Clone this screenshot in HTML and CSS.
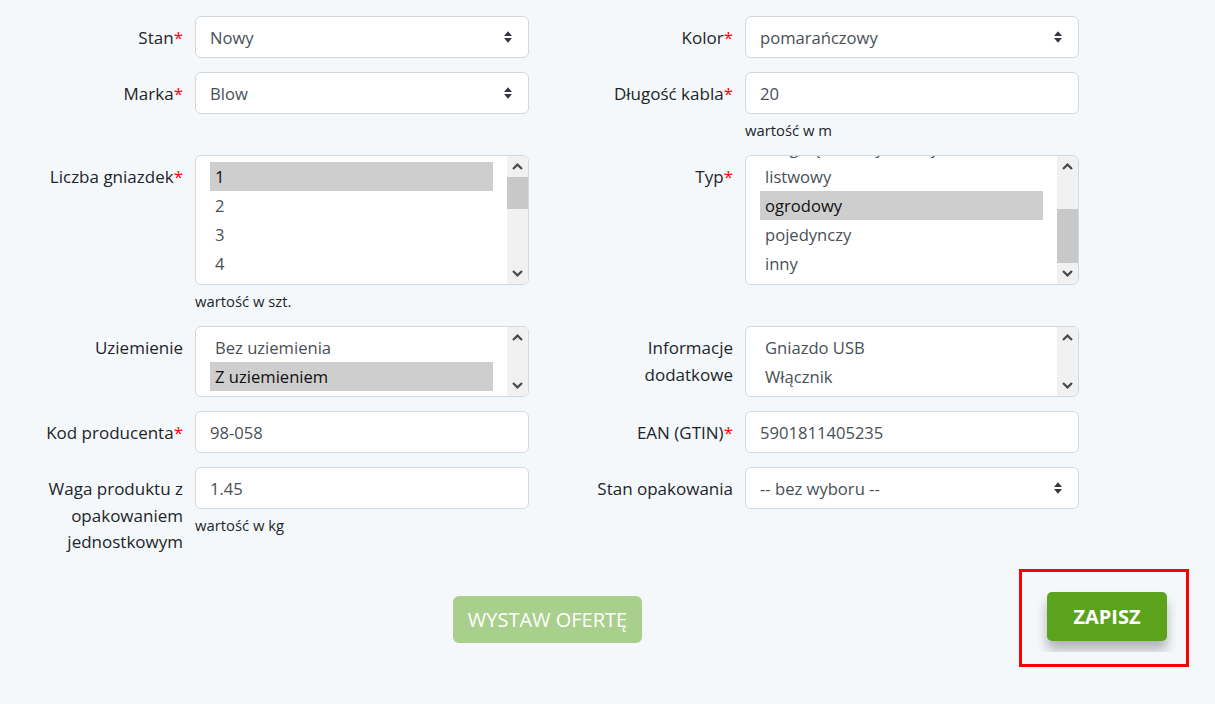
FILE: index.html
```html
<!DOCTYPE html>
<html lang="pl">
<head>
  <meta charset="UTF-8">
  <title>Parametry produktu</title>
  <link rel="stylesheet" href="styles.css">
</head>
<body>

  <div class="form">

    <div class="grid">

      <div class="field">
        <label class="field-label">Stan<span class="req">*</span></label>
        <div class="field-body">
          <select class="control select">
            <option>Nowy</option>
            <option>Używany</option>
          </select>
        </div>
      </div>

      <div class="field">
        <label class="field-label">Kolor<span class="req">*</span></label>
        <div class="field-body">
          <select class="control select">
            <option>pomarańczowy</option>
            <option>czarny</option>
            <option>biały</option>
          </select>
        </div>
      </div>

      <div class="field">
        <label class="field-label">Marka<span class="req">*</span></label>
        <div class="field-body">
          <select class="control select">
            <option>Blow</option>
          </select>
        </div>
      </div>

      <div class="field">
        <label class="field-label">Długość kabla<span class="req">*</span></label>
        <div class="field-body">
          <input class="control" type="text" value="20">
          <div class="hint">wartość w m</div>
        </div>
      </div>

      <div class="field">
        <label class="field-label">Liczba gniazdek<span class="req">*</span></label>
        <div class="field-body">
          <div class="listbox tall" role="listbox">
            <div class="listbox-items">
              <div class="option selected">1</div>
              <div class="option">2</div>
              <div class="option">3</div>
              <div class="option">4</div>
            </div>
            <div class="scrollbar">
              <span class="sb-btn"><svg width="11" height="7" viewBox="0 0 11 7"><path d="M1 6 L5.5 1.6 L10 6" fill="none" stroke="#4a4a4a" stroke-width="2.2"/></svg></span>
              <span class="sb-track"><span class="sb-thumb"></span></span>
              <span class="sb-btn"><svg width="11" height="7" viewBox="0 0 11 7"><path d="M1 1 L5.5 5.4 L10 1" fill="none" stroke="#4a4a4a" stroke-width="2.2"/></svg></span>
            </div>
          </div>
          <div class="hint">wartość w szt.</div>
        </div>
      </div>

      <div class="field">
        <label class="field-label">Typ<span class="req">*</span></label>
        <div class="field-body">
          <div class="listbox tall" role="listbox">
            <div class="listbox-items" data-scroll="end">
              <div class="option">rozgałęźnik wtyczkowy</div>
              <div class="option">listwowy</div>
              <div class="option selected">ogrodowy</div>
              <div class="option">pojedynczy</div>
              <div class="option">inny</div>
            </div>
            <div class="scrollbar">
              <span class="sb-btn"><svg width="11" height="7" viewBox="0 0 11 7"><path d="M1 6 L5.5 1.6 L10 6" fill="none" stroke="#4a4a4a" stroke-width="2.2"/></svg></span>
              <span class="sb-track"><span class="sb-thumb at-end"></span></span>
              <span class="sb-btn"><svg width="11" height="7" viewBox="0 0 11 7"><path d="M1 1 L5.5 5.4 L10 1" fill="none" stroke="#4a4a4a" stroke-width="2.2"/></svg></span>
            </div>
          </div>
        </div>
      </div>

      <div class="field">
        <label class="field-label">Uziemienie</label>
        <div class="field-body">
          <div class="listbox short" role="listbox">
            <div class="listbox-items">
              <div class="option">Bez uziemienia</div>
              <div class="option selected">Z uziemieniem</div>
            </div>
            <div class="scrollbar">
              <span class="sb-btn"><svg width="11" height="7" viewBox="0 0 11 7"><path d="M1 6 L5.5 1.6 L10 6" fill="none" stroke="#4a4a4a" stroke-width="2.2"/></svg></span>
              <span class="sb-track"></span>
              <span class="sb-btn"><svg width="11" height="7" viewBox="0 0 11 7"><path d="M1 1 L5.5 5.4 L10 1" fill="none" stroke="#4a4a4a" stroke-width="2.2"/></svg></span>
            </div>
          </div>
        </div>
      </div>

      <div class="field">
        <label class="field-label">Informacje dodatkowe</label>
        <div class="field-body">
          <div class="listbox short" role="listbox">
            <div class="listbox-items">
              <div class="option">Gniazdo USB</div>
              <div class="option">Włącznik</div>
            </div>
            <div class="scrollbar">
              <span class="sb-btn"><svg width="11" height="7" viewBox="0 0 11 7"><path d="M1 6 L5.5 1.6 L10 6" fill="none" stroke="#4a4a4a" stroke-width="2.2"/></svg></span>
              <span class="sb-track"></span>
              <span class="sb-btn"><svg width="11" height="7" viewBox="0 0 11 7"><path d="M1 1 L5.5 5.4 L10 1" fill="none" stroke="#4a4a4a" stroke-width="2.2"/></svg></span>
            </div>
          </div>
        </div>
      </div>

      <div class="field">
        <label class="field-label">Kod producenta<span class="req">*</span></label>
        <div class="field-body">
          <input class="control" type="text" value="98-058">
        </div>
      </div>

      <div class="field">
        <label class="field-label">EAN (GTIN)<span class="req">*</span></label>
        <div class="field-body">
          <input class="control" type="text" value="5901811405235">
        </div>
      </div>

      <div class="field">
        <label class="field-label">Waga produktu z opakowaniem jednostkowym</label>
        <div class="field-body">
          <input class="control" type="text" value="1.45">
          <div class="hint">wartość w kg</div>
        </div>
      </div>

      <div class="field">
        <label class="field-label">Stan opakowania</label>
        <div class="field-body">
          <select class="control select">
            <option>-- bez wyboru --</option>
          </select>
        </div>
      </div>

    </div>

    <div class="actions">
      <button class="btn btn-offer">WYSTAW OFERTĘ</button>
      <div class="save-frame">
        <div class="save-clip">
          <button class="btn btn-save">ZAPISZ</button>
        </div>
      </div>
    </div>

  </div>

  <script>
    document.querySelectorAll('.listbox-items[data-scroll="end"]').forEach(el => {
      el.scrollTop = el.scrollHeight;
    });
  </script>

</body>
</html>
```

FILE: styles.css
```css
body {
  margin: 0;
  padding: 0;
  background: #f5f8fb;
  font-family: "Open Sans", "Noto Sans", sans-serif;
  color: #212529;
}

.form {
  width: 1215px;
  padding-top: 16px;
}

.grid {
  display: grid;
  grid-template-columns: 550px 550px;
  row-gap: 14px;
  align-items: start;
}

.field {
  display: grid;
  grid-template-columns: 183px 334px;
  column-gap: 12px;
  align-items: start;
}

.field-label {
  text-align: right;
  font-size: 17px;
  line-height: 26.5px;
  padding-top: 9px;
  padding-left: 26px;
}

.req {
  color: #f00;
}

.control {
  display: block;
  width: 100%;
  height: 42px;
  box-sizing: border-box;
  border: 1px solid #d3d8de;
  border-radius: 6px;
  background: #fff;
  padding: 0 14px;
  font-family: inherit;
  font-size: 16.6px;
  color: #495057;
  outline: none;
}

.select {
  appearance: none;
  -webkit-appearance: none;
  background: #fff url("data:image/svg+xml,%3Csvg xmlns='http://www.w3.org/2000/svg' viewBox='0 0 10 14'%3E%3Cpath d='M1 6 L5 1.2 L9 6Z M1 8 L9 8 L5 12.8Z' fill='%23343a40'/%3E%3C/svg%3E") no-repeat right 15px center / 10px 14px;
}

.hint {
  font-size: 14.8px;
  line-height: 22px;
  margin-top: 5px;
}

.listbox {
  display: flex;
  box-sizing: border-box;
  border: 1px solid #d3d8de;
  border-radius: 6px;
  background: #fff;
  overflow: hidden;
}

.listbox.tall {
  height: 130px;
}

.listbox.short {
  height: 71px;
}

.listbox-items {
  flex: 1;
  min-width: 0;
  overflow: hidden;
  padding: 6px 14px;
}

.option {
  height: 29px;
  line-height: 29px;
  padding: 0 5px;
  font-size: 16.6px;
  color: #495057;
  white-space: nowrap;
}

.option.selected {
  background: #cecece;
  color: #111;
}

.scrollbar {
  width: 21px;
  display: flex;
  flex-direction: column;
  background: #f1f1f1;
}

.sb-btn {
  height: 21px;
  flex: none;
  display: flex;
  align-items: center;
  justify-content: center;
}

.sb-track {
  flex: 1;
  display: flex;
  flex-direction: column;
}

.sb-thumb {
  height: 32px;
  background: #c8c8c8;
}

.sb-thumb.at-end {
  height: 54px;
  margin-top: auto;
}

.actions {
  display: flex;
  align-items: center;
  margin-top: 13px;
  padding-left: 453px;
  padding-right: 26px;
}

.btn {
  border: none;
  color: #fff;
  font-family: inherit;
  cursor: pointer;
  padding: 0;
}

.btn-offer {
  width: 189px;
  height: 47px;
  margin-top: 3px;
  background: #a9cf8c;
  border-radius: 6px;
  font-size: 20px;
  font-weight: 400;
}

.save-frame {
  margin-left: auto;
  width: 170px;
  height: 98px;
  box-sizing: border-box;
  border: 3px solid #f00;
  padding: 1px 10px 12px 7px;
}

.save-clip {
  height: 100%;
  box-sizing: border-box;
  overflow: hidden;
  padding: 19px 9px 0 18px;
}

.btn-save {
  width: 120px;
  height: 49px;
  background: #5ba31c;
  border-radius: 5px;
  font-size: 20px;
  font-weight: 700;
  box-shadow: 0 9px 12px rgba(0, 0, 0, 0.28);
}
```
